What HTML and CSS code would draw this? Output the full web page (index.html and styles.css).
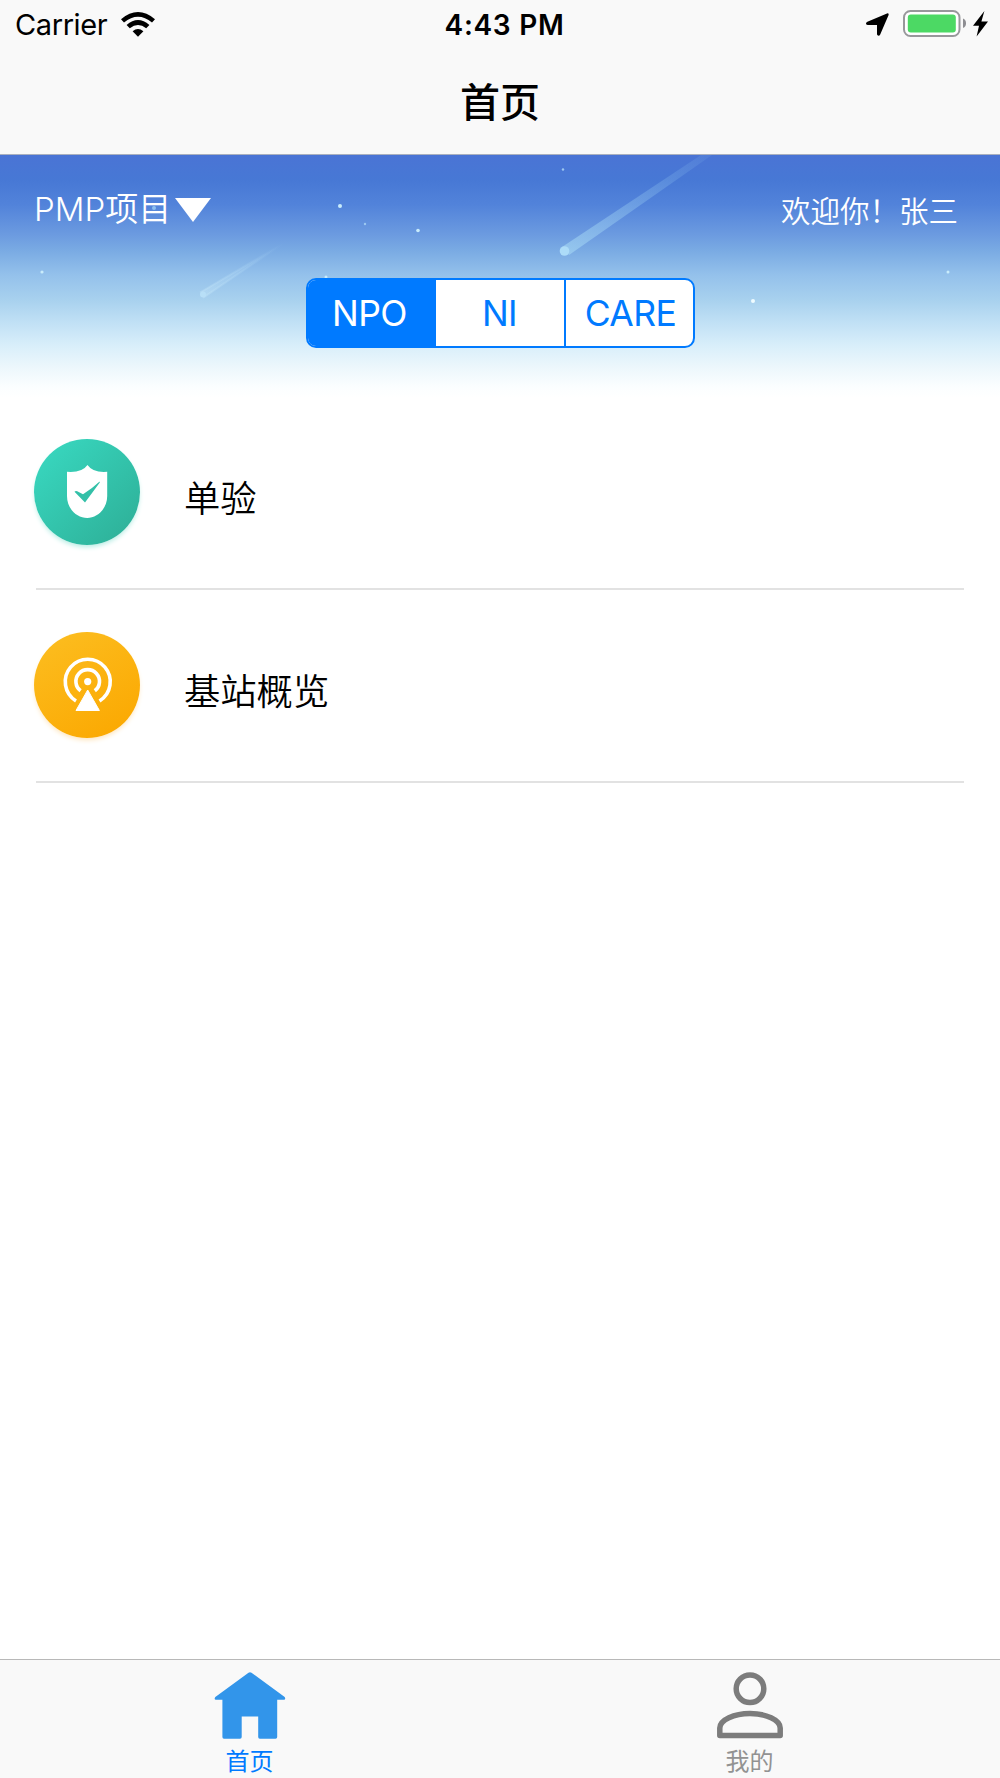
FILE: index.html
```html
<!DOCTYPE html>
<html lang="zh-CN">
<head>
    <meta charset="UTF-8">
    <meta name="viewport" content="width=device-width, initial-scale=1.0">
    <title>首页</title>
    <link rel="stylesheet" href="styles.css">
</head>
<body>

    <div class="app">
        <header class="header">
            <div class="status-bar">
                <div class="status-left">
                    <span class="carrier">Carrier</span>
                    <svg class="wifi" width="34" height="25" viewBox="0 0 34 25">
                        <path d="M0 7.2 Q17 -7.2 34 7.2 L31 10.6 Q17 -1 3 10.6 Z"/>
                        <path d="M5.6 13 Q17 3 28.4 13 L25.2 16.3 Q17 9.6 8.8 16.3 Z"/>
                        <path d="M11.6 19.2 Q17 14.8 22.4 19.2 L17 24.8 Z"/>
                    </svg>
                </div>
                <span class="time">4:43 PM</span>
                <div class="status-right">
                    <svg width="23" height="23" viewBox="0 0 23 23">
                        <path d="M21 .4 Q23 0 22.6 2 L14.2 21.4 Q13.6 22.8 12 22.6 Q11 22.4 11 21 V12 H2 Q.3 12 0 10.8 Q-.1 9.4 1.4 8.8 Z"/>
                    </svg>
                    <svg class="battery" width="63" height="28" viewBox="0 0 63 28">
                        <rect x="1" y="1" width="55.500" height="25" rx="6.500" fill="#fff" stroke="#98989b" stroke-width="2"/>
                        <rect x="4.800" y="4.500" width="48" height="18" rx="3" fill="#4cd964"/>
                        <path d="M60 8.500 Q63 9.500 63 13.300 Q63 17 60 18.100 Z" fill="#8e8e92"/>
                    </svg>
                    <svg width="15" height="26" viewBox="0 0 15 26">
                        <path d="M11.4 0 L0 14.8 H6 L3.6 25.4 L15 10.6 H8.4 Z"/>
                    </svg>
                </div>
            </div>
            <h1 class="title">首页</h1>
        </header>

        <section class="banner">
            <svg class="sky" width="1000" height="243" viewBox="0 0 1000 243">
                <defs>
                    <linearGradient id="tail" x1="0" y1="1" x2="1" y2="0">
                        <stop offset="0" stop-color="#a9dbf5" stop-opacity=".6"/>
                        <stop offset="1" stop-color="#8fc4f0" stop-opacity=".1"/>
                    </linearGradient>
                    <linearGradient id="tail-faint" x1="0" y1="1" x2="1" y2="0">
                        <stop offset="0" stop-color="#c3e5f8" stop-opacity=".45"/>
                        <stop offset="1" stop-color="#a0cdf2" stop-opacity="0"/>
                    </linearGradient>
                </defs>
                <path d="M562 92 L701 0 H712 L569 100 Z" fill="url(#tail)"/>
                <circle cx="564.5" cy="96" r="4.8" fill="#addcf8"/>
                <path d="M201 137 L284 88 L204 142 Z" fill="url(#tail-faint)" stroke="url(#tail-faint)" stroke-width="2"/>
                <circle cx="203" cy="139.500" r="3" fill="#b8dff7"/>
                <g fill="#c9ecfb">
                    <circle cx="340" cy="51" r="2"/>
                    <circle cx="365" cy="69" r="1.200" fill="#9cc8f0"/>
                    <circle cx="418" cy="75.500" r="1.800"/>
                    <circle cx="563" cy="14.500" r="1.200" fill="#9cc8f0"/>
                    <circle cx="42" cy="117" r="1.600"/>
                    <circle cx="154" cy="53" r="2" fill="#8cc0f0"/>
                    <circle cx="326" cy="122" r="1.500"/>
                    <circle cx="753" cy="146" r="2" fill="#effcff"/>
                    <circle cx="948" cy="117" r="1.500"/>
                </g>
            </svg>
            <div class="banner-top">
                <div class="project">
                    <span>PMP项目</span>
                    <svg width="36" height="24" viewBox="0 0 36 24"><path d="M0 0 H36 L18 24 Z" fill="#fff"/></svg>
                </div>
                <span class="welcome">欢迎你！张三</span>
            </div>
            <div class="segment">
                <div class="segment-item active">NPO</div>
                <div class="segment-item">NI</div>
                <div class="segment-item">CARE</div>
            </div>
        </section>

        <main class="list">
            <div class="list-item">
                <div class="icon icon-green">
                    <svg width="106" height="106" viewBox="0 0 106 106">
                        <path d="M53.500 26 Q59 34 73.200 32.800 V57 C73.200 70 63 79 53.200 79 C43 79 33 70 33 57 V32.800 Q48 34 53.500 26 Z" fill="#fff"/>
                        <path d="M40.500 52.800 Q41.500 51.400 43.200 52.200 L49 55.300 Q58 49.500 65.600 42.400 L65.800 43.500 L51 63.400 Z" fill="#33c0a8"/>
                    </svg>
                </div>
                <span class="label">单验</span>
            </div>
            <div class="list-item">
                <div class="icon icon-orange">
                    <svg width="106" height="106" viewBox="0 0 106 106">
                        <g fill="none" stroke="#fff" stroke-width="3.600">
                            <path d="M42 69 A22.500 22.500 0 1 1 65.500 69"/>
                            <path d="M46.600 58.800 A11.800 11.800 0 1 1 60.800 58.800"/>
                        </g>
                        <circle cx="53.700" cy="49.600" r="3.600" fill="#fff"/>
                        <path d="M53.700 58 L65.400 78.500 H42 Z" fill="#fff" stroke="#fff" stroke-width="1" stroke-linejoin="round"/>
                    </svg>
                </div>
                <span class="label">基站概览</span>
            </div>
        </main>

        <nav class="tab-bar">
            <div class="tab active">
                <svg width="72" height="68" viewBox="0 0 72 68">
                    <path d="M34.500 .8 Q36 -.4 37.500 .8 L70.700 25 Q72 27.500 70 27.800 H63.200 V65 Q63.200 66.800 61.500 66.800 H45.800 Q44.200 66.800 44.200 65 V44.500 H27.700 V65 Q27.700 66.800 26 66.800 H10 Q8.400 66.800 8.400 65 V27.800 H2 Q-.3 27.500 1.300 25 Z" fill="#3295ea"/>
                </svg>
                <span>首页</span>
            </div>
            <div class="tab">
                <svg width="72" height="68" viewBox="0 0 72 68">
                    <g fill="none" stroke="#7c7c7c" stroke-width="5.500" stroke-linejoin="round">
                        <circle cx="36" cy="16.700" r="13.800"/>
                        <path d="M5.800 63.600 V56 C5.800 48 20 41.500 36 41.500 C52 41.500 66.200 48 66.200 56 V63.600 Z"/>
                    </g>
                </svg>
                <span>我的</span>
            </div>
        </nav>
    </div>

</body>
</html>
```

FILE: styles.css
```css
* { box-sizing: border-box; }
body { margin: 0; font-family: Inter, "Noto Sans CJK SC", sans-serif; color: #000; background: #fff; }
svg { display: block; flex: none; }
.app { display: flex; flex-direction: column; height: 1778px; overflow: hidden; }

.header { height: 155px; background: #f9f9f9; border-bottom: 1px solid #a9b0bf; }
.status-bar { display: grid; grid-template-columns: 1fr auto 1fr; align-items: center; height: 50px; padding: 0 12px 0 15px; font-size: 29px; line-height: 50px; }
.status-left, .status-right { display: flex; align-items: center; }
.status-left { gap: 14px; }
.status-right { justify-content: flex-end; gap: 14px; padding-bottom: 2px; }
.wifi { margin-bottom: 2px; }
.battery { margin-right: -7px; }
.carrier { letter-spacing: -0.4px; }
.time { padding: 0 0 0 6px; font-weight: 600; font-size: 28px; letter-spacing: 0.7px; }
.title { margin: 0; padding-top: 22px; font-size: 40px; line-height: 62px; font-weight: 500; text-align: center; }

.banner { position: relative; height: 243px; background: linear-gradient(#4a74d5 0, #4778d5 25px, #5283da 50px, #6c9be0 80px, #79aae3 95px, #94c1eb 120px, #a8d1ee 145px, #c0e0f5 167px, #d8eefa 190px, #ecf7fc 212px, #fbfeff 232px, #fff 243px); }
.sky { position: absolute; left: 0; top: 0; }
.banner-top { position: relative; display: flex; justify-content: space-between; height: 123px; padding: 30px 42px 0 34px; color: #fff; font-weight: 350; }
.project { display: flex; height: 50px; font-size: 33px; line-height: 48px; }
.project svg { margin: 13px 0 0 4px; }
.welcome { font-size: 29.5px; line-height: 52px; }
.segment { position: relative; display: flex; width: 389px; height: 70px; margin: 0 auto; border: 2px solid #007aff; border-radius: 10px; background: #fff; overflow: hidden; }
.segment-item { flex: 1; border-left: 2px solid #007aff; color: #007aff; font-size: 35.5px; line-height: 67px; text-align: center; letter-spacing: -0.6px; }
.segment-item:first-child { flex: 0 0 126px; padding-right: 2px; border-left: 0; }
.segment-item:last-child { flex: 0 0 129px; padding-left: 3px; }
.segment-item.active { background: #007aff; color: #fff; }

.list { flex: 1; padding: 0 36px; }
.list-item { display: flex; height: 192px; border-bottom: 2px solid #e2e2e2; }
.list-item + .list-item { height: 193px; }
.icon { width: 106px; height: 106px; margin: 41px 0 0 -2px; border-radius: 50%; }
.list-item + .list-item .icon { margin-top: 42px; }
.icon-green { background: linear-gradient(135deg, #38d6be 10%, #2fb49c 85%); box-shadow: 0 3px 5px -1px #b5ece3; }
.icon-orange { background: linear-gradient(150deg, #fcbc1e 10%, #fba902 90%); box-shadow: 0 3px 5px -1px #fde5bd; }
.label { margin: 75px 0 0 44px; font-size: 36.3px; font-weight: 350; line-height: 52px; }
.list-item + .list-item .label { margin-top: 76px; }

.tab-bar { display: flex; height: 119px; background: #f9f9f9; border-top: 1px solid #b8b8b8; }
.tab { flex: 1; display: flex; flex-direction: column; align-items: center; padding: 12px 1px 0 0; color: #929292; font-size: 24px; line-height: 34px; }
.tab span { margin-top: 5px; }
.tab.active { color: #007aff; }
```
